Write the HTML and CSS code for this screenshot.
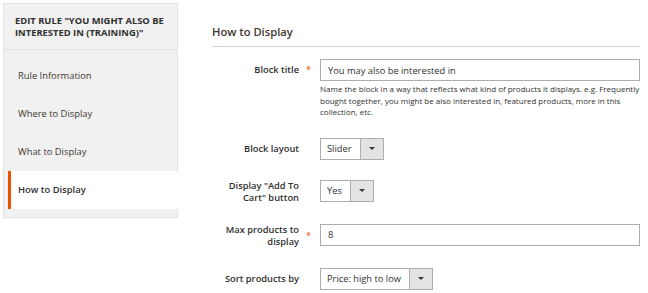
FILE: index.html
```html
<!DOCTYPE html>
<html lang="en">
<head>
    <meta charset="UTF-8">
    <title>Edit Rule - How to Display</title>
    <link rel="stylesheet" href="styles.css">
</head>
<body>
    <div class="page">
        <div class="side-nav">
            <div class="side-title">Edit Rule "You might also be interested in (Training)"</div>
            <ul class="nav-items">
                <li class="nav-item">Rule Information</li>
                <li class="nav-item">Where to Display</li>
                <li class="nav-item">What to Display</li>
                <li class="nav-item active">How to Display</li>
            </ul>
        </div>

        <div class="content">
            <h3 class="fieldset-title">How to Display</h3>

            <div class="field">
                <label class="field-label required">Block title</label>
                <div class="field-control">
                    <input type="text" class="text-input" value="You may also be interested in">
                    <div class="field-note">Name the block in a way that reflects what kind of products it displays. e.g. Frequently bought together, you might be also interested in, featured products, more in this collection, etc.</div>
                </div>
            </div>

            <div class="field">
                <label class="field-label">Block layout</label>
                <div class="field-control">
                    <div class="select-box"><span class="select-value">Slider</span><span class="select-arrow"></span></div>
                </div>
            </div>

            <div class="field">
                <label class="field-label">Display "Add To Cart" button</label>
                <div class="field-control">
                    <div class="select-box"><span class="select-value">Yes</span><span class="select-arrow"></span></div>
                </div>
            </div>

            <div class="field">
                <label class="field-label required">Max products to display</label>
                <div class="field-control">
                    <input type="text" class="text-input" value="8">
                </div>
            </div>

            <div class="field">
                <label class="field-label">Sort products by</label>
                <div class="field-control">
                    <div class="select-box"><span class="select-value">Price: high to low</span><span class="select-arrow"></span></div>
                </div>
            </div>
        </div>
    </div>
</body>
</html>
```

FILE: styles.css
```css
body {
    margin: 0;
    font-family: 'Open Sans', 'Liberation Sans', sans-serif;
    color: #303030;
    background: #fff;
}

.page {
    display: flex;
    align-items: flex-start;
    padding: 3px 8px 0 3px;
}

.side-nav {
    width: 175px;
    flex-shrink: 0;
    background: #f1f1f1;
    border: 1px solid #e3e3e3;
    box-sizing: border-box;
    padding-bottom: 8px;
}

.side-title {
    padding: 11px 4px 0 11px;
    height: 46px;
    box-sizing: border-box;
    border-bottom: 1px solid #e3e3e3;
    font-size: 9.4px;
    line-height: 11.5px;
    font-weight: 700;
    text-transform: uppercase;
    color: #303030;
}

.nav-items {
    list-style: none;
    margin: 0;
    padding: 7px 0 0 4px;
}

.nav-item {
    height: 38px;
    line-height: 38px;
    padding-left: 10px;
    font-size: 9.4px;
    color: #41362f;
}

.nav-item.active {
    background: #fff;
    border-left: 3px solid #eb5202;
    padding-left: 7px;
    font-weight: 600;
    color: #303030;
    margin-right: -1px;
}

.content {
    flex: 1;
    margin-left: 34px;
}

.fieldset-title {
    margin: 21px 0 0;
    padding-bottom: 6px;
    border-bottom: 1px solid #d6d1c4;
    font-size: 11.2px;
    line-height: 16px;
    font-weight: 600;
    color: #41362f;
}

.field {
    display: flex;
    align-items: flex-start;
    margin-top: 12px;
}

.field + .field {
    margin-top: 20px;
}

.field-label {
    width: 108px;
    min-height: 22px;
    flex-shrink: 0;
    box-sizing: border-box;
    padding-right: 21px;
    display: flex;
    align-items: center;
    justify-content: flex-end;
    text-align: right;
    font-size: 9.3px;
    line-height: 12px;
    font-weight: 600;
    color: #303030;
    position: relative;
}

.field-label.required::after {
    content: "*";
    position: absolute;
    right: 9px;
    top: 50%;
    margin-top: -5px;
    line-height: 10px;
    color: #eb5202;
    font-size: 9px;
    font-weight: 400;
}

.field-control {
    flex: 1;
}

.text-input {
    display: block;
    width: 100%;
    box-sizing: border-box;
    height: 22px;
    border: 1px solid #adadad;
    padding: 0 7px;
    font-family: inherit;
    font-size: 9.3px;
    color: #303030;
    margin: 0;
}

.field-note {
    margin-top: 2px;
    font-size: 8px;
    line-height: 11.5px;
    color: #303030;
}

.select-box {
    display: flex;
    width: max-content;
    height: 22px;
    border: 1px solid #adadad;
    box-sizing: border-box;
    font-size: 9.3px;
    color: #303030;
}

.select-value {
    padding: 0 8px 0 6px;
    line-height: 20px;
}

.select-arrow {
    width: 22px;
    background: #e3e3e3;
    border-left: 1px solid #adadad;
    display: flex;
    align-items: center;
    justify-content: center;
}

.select-arrow::after {
    content: "";
    border-left: 3px solid transparent;
    border-right: 3px solid transparent;
    border-top: 3px solid #41362f;
}
```
